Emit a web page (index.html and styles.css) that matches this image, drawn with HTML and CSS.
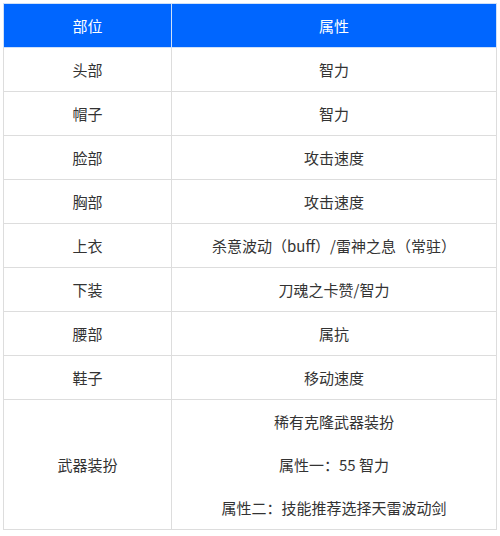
FILE: index.html
```html
<!DOCTYPE html>
<html lang="zh">
<head>
<meta charset="utf-8">
<link rel="stylesheet" href="styles.css">
</head>
<body>
<table class="gear">
  <thead>
    <tr><th class="col-part">部位</th><th>属性</th></tr>
  </thead>
  <tbody>
    <tr><td>头部</td><td>智力</td></tr>
    <tr><td>帽子</td><td>智力</td></tr>
    <tr><td>脸部</td><td>攻击速度</td></tr>
    <tr><td>胸部</td><td>攻击速度</td></tr>
    <tr><td>上衣</td><td>杀意波动（buff）/雷神之息（常驻）</td></tr>
    <tr><td>下装</td><td>刀魂之卡赞/智力</td></tr>
    <tr><td>腰部</td><td>属抗</td></tr>
    <tr><td>鞋子</td><td>移动速度</td></tr>
    <tr class="multi">
      <td>武器装扮</td>
      <td>
        <p>稀有克隆武器装扮</p>
        <p>属性一：55 智力</p>
        <p>属性二：技能推荐选择天雷波动剑</p>
      </td>
    </tr>
  </tbody>
</table>
</body>
</html>
```

FILE: styles.css
```css
html, body {
  margin: 0;
  padding: 0;
  background: #ffffff;
}
body {
  padding: 3px;
  font-family: "Noto Sans CJK SC", "Microsoft YaHei", sans-serif;
  font-size: 15px;
  color: #333333;
}
.gear {
  width: 494px;
  border-collapse: collapse;
  table-layout: fixed;
}
.gear th,
.gear td {
  border: 1px solid #dddddd;
  text-align: center;
  vertical-align: middle;
  height: 43px;
  padding: 0;
  font-weight: normal;
  line-height: 20px;
}
.gear th {
  background: #0066ff;
  color: #ffffff;
  border-color: #cfe0f8;
}
.col-part {
  width: 167px;
}
.multi td p {
  margin: 0;
  line-height: 43px;
}
```
